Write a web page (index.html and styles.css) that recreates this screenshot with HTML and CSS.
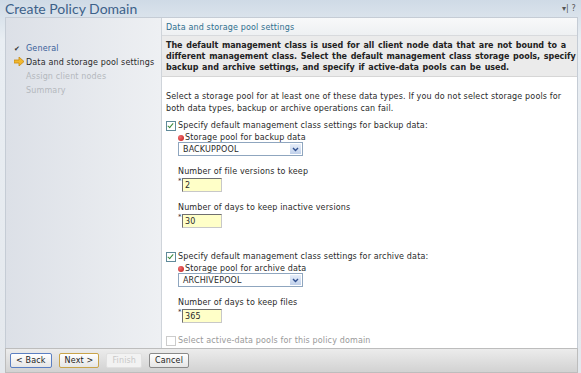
FILE: index.html
```html
<!DOCTYPE html>
<html lang="en">
<head>
    <meta charset="UTF-8">
    <title>Create Policy Domain</title>
    <link rel="stylesheet" href="styles.css">
</head>
<body>
    <div class="window">
        <div class="titlebar">
            <span class="title">Create Policy Domain</span>
            <span class="tools">&#9662;| ?</span>
        </div>

        <div class="main">
            <div class="steps">
                <div class="step done"><span class="mark">&#10004;</span>General</div>
                <div class="step current">
                    <span class="mark">
                        <svg width="10" height="9" viewBox="0 0 10 9"><path d="M0 3h5V0l5 4.5L5 9V6H0z" fill="#f0b830" stroke="#c98a10" stroke-width="0.8"/></svg>
                    </span>Data and storage pool settings
                </div>
                <div class="step todo">Assign client nodes</div>
                <div class="step todo">Summary</div>
            </div>

            <div class="content">
                <div class="section-head">Data and storage pool settings</div>
                <div class="intro">
                    The default management class is used for all client node data that are not bound to a<br>
                    different management class. Select the default management class storage pools, specify<br>
                    backup and archive settings, and specify if active-data pools can be used.
                </div>

                <div class="form">
                    <p class="note">Select a storage pool for at least one of these data types. If you do not select storage pools for both data types, backup or archive operations can fail.</p>

                    <div class="group">
                        <label class="check"><span class="box on"></span>Specify default management class settings for backup data:</label>
                        <div class="fields">
                            <div class="label"><span class="req"></span>Storage pool for backup data</div>
                            <div class="select">BACKUPPOOL<span class="drop"><svg width="7" height="5" viewBox="0 0 7 5"><path d="M1 1l2.5 2.5L6 1" fill="none" stroke="#2f4f8f" stroke-width="1.4"/></svg></span></div>

                            <div class="label spaced">Number of file versions to keep</div>
                            <div class="input-row"><span class="star">*</span><span class="input">2</span></div>

                            <div class="label spaced">Number of days to keep inactive versions</div>
                            <div class="input-row"><span class="star">*</span><span class="input">30</span></div>
                        </div>
                    </div>

                    <div class="group archive">
                        <label class="check"><span class="box on"></span>Specify default management class settings for archive data:</label>
                        <div class="fields">
                            <div class="label"><span class="req"></span>Storage pool for archive data</div>
                            <div class="select">ARCHIVEPOOL<span class="drop"><svg width="7" height="5" viewBox="0 0 7 5"><path d="M1 1l2.5 2.5L6 1" fill="none" stroke="#2f4f8f" stroke-width="1.4"/></svg></span></div>

                            <div class="label spaced">Number of days to keep files</div>
                            <div class="input-row"><span class="star">*</span><span class="input">365</span></div>
                        </div>
                    </div>

                    <label class="check disabled"><span class="box"></span>Select active-data pools for this policy domain</label>
                </div>
            </div>
        </div>

        <div class="buttons">
            <button class="btn back">&lt; Back</button>
            <button class="btn next">Next &gt;</button>
            <button class="btn" disabled>Finish</button>
            <button class="btn">Cancel</button>
        </div>
    </div>
</body>
</html>
```

FILE: styles.css
```css
body {
    margin: 0;
    font-family: "DejaVu Sans", Verdana, sans-serif;
    font-size: 8px;
    letter-spacing: 0.15px;
    color: #2a2a2a;
    background: #d8e1eb;
}
.window {
    width: 581px;
    height: 373px;
    display: flex;
    flex-direction: column;
    background: linear-gradient(to bottom, #cfdae6, #e9eef3 40px, #e4e8ed);
}
.titlebar {
    height: 17px;
    display: flex;
    align-items: center;
    justify-content: space-between;
    padding: 0 5px 0 5px;
}
.title {
    font-family: Lato, "Open Sans", sans-serif;
    font-size: 14px;
    letter-spacing: 0;
    color: #3d6189;
}
.tools {
    font-size: 8px;
    color: #555;
}
.main {
    flex: 1;
    display: flex;
    margin: 0 3px 0 5px;
    border: 1px solid #c5ccd5;
    border-bottom: none;
}
.steps {
    width: 155px;
    flex-shrink: 0;
    padding-top: 24px;
    background: linear-gradient(to right, #dce0e7, #eef0f3);
    border-right: 1px solid #cfd4da;
}
.step {
    height: 14px;
    line-height: 14px;
    padding-left: 20px;
    position: relative;
    white-space: nowrap;
}
.step .mark {
    position: absolute;
    left: 8px;
    top: 0;
}
.step.done {
    color: #3a5f9a;
}
.step.done .mark {
    color: #333;
    font-size: 7px;
}
.step.current .mark svg {
    vertical-align: -1px;
}
.step.todo {
    color: #b4b8bd;
}
.content {
    flex: 1;
    min-width: 0;
    background: #fff;
    display: flex;
    flex-direction: column;
}
.section-head {
    height: 17px;
    line-height: 19px;
    padding-left: 4px;
    color: #2f6f8f;
    background: linear-gradient(to bottom, #f8f9fa, #eef0f2);
    border-bottom: 1px solid #d8dadd;
}
.intro {
    padding: 4px 1px 3px 4px;
    font-weight: bold;
    letter-spacing: -0.04px;
    word-spacing: 1px;
    line-height: 11px;
    white-space: nowrap;
    color: #222;
    background: #ebebeb;
    border-bottom: 1px solid #d6d6d6;
}
.form {
    padding: 14px 4px 0;
}
.note {
    margin: 0 0 5px;
    line-height: 12px;
}
.check {
    display: flex;
    align-items: center;
    height: 11px;
}
.box {
    width: 8px;
    height: 8px;
    border: 1px solid #5f8a9a;
    background: #fff;
    margin-right: 2px;
    position: relative;
}
.box.on::after {
    content: "";
    position: absolute;
    left: 2px;
    top: 0;
    width: 2px;
    height: 5px;
    border: solid #3a8a3a;
    border-width: 0 1.5px 1.5px 0;
    transform: rotate(40deg);
}
.check.disabled {
    color: #999;
}
.check.disabled .box {
    border-color: #ccc;
}
.fields {
    padding-left: 12px;
}
.label {
    line-height: 9px;
    margin-top: 2px;
    display: flex;
    align-items: center;
}
.label.spaced {
    margin-top: 11px;
}
.req {
    width: 6px;
    height: 6px;
    border-radius: 50%;
    background: radial-gradient(circle at 35% 35%, #f07070, #c01818);
    margin-right: 1px;
}
.select {
    width: 119px;
    height: 12px;
    line-height: 13px;
    border: 1px solid #8fa6bf;
    padding-left: 4px;
    position: relative;
    margin-top: 0;
}
.drop {
    position: absolute;
    right: 1px;
    top: 1px;
    width: 11px;
    height: 10px;
    display: flex;
    align-items: center;
    justify-content: center;
    background: linear-gradient(#e6eefa, #c0d0ea);
}
.input-row {
    display: flex;
    margin-top: 2px;
}
.star {
    width: 4px;
    font-size: 7px;
    line-height: 6px;
}
.input {
    width: 36px;
    height: 12px;
    line-height: 13px;
    padding-left: 2px;
    background: #ffffc8;
    border: 1px solid #9a9a9a;
    border-color: #6f6f6f #c8c8c8 #c8c8c8 #6f6f6f;
}
.group {
    margin-bottom: 23px;
}
.group.archive {
    margin-bottom: 12px;
}
.buttons {
    height: 23px;
    display: flex;
    align-items: center;
    gap: 7px;
    padding-left: 4px;
    margin: 0 3px 0 5px;
    background: linear-gradient(to bottom, #ececec, #d2d2d2);
    border: 1px solid #bdbdbd;
}
.btn {
    font-family: "DejaVu Sans", Verdana, sans-serif;
    font-size: 8px;
    letter-spacing: 0.15px;
    height: 15px;
    padding: 0 5px;
    border: 1px solid #8a8a8a;
    border-radius: 2px;
    background: linear-gradient(to bottom, #ffffff, #e6e6e6);
    color: #222;
}
.btn.back {
    border-color: #5b7fc2;
}
.btn.next {
    border-color: #c9a44a;
}
.btn:disabled {
    color: #c8c8c8;
    border-color: #e0e0e0;
    background: #f2f2f2;
}
```
